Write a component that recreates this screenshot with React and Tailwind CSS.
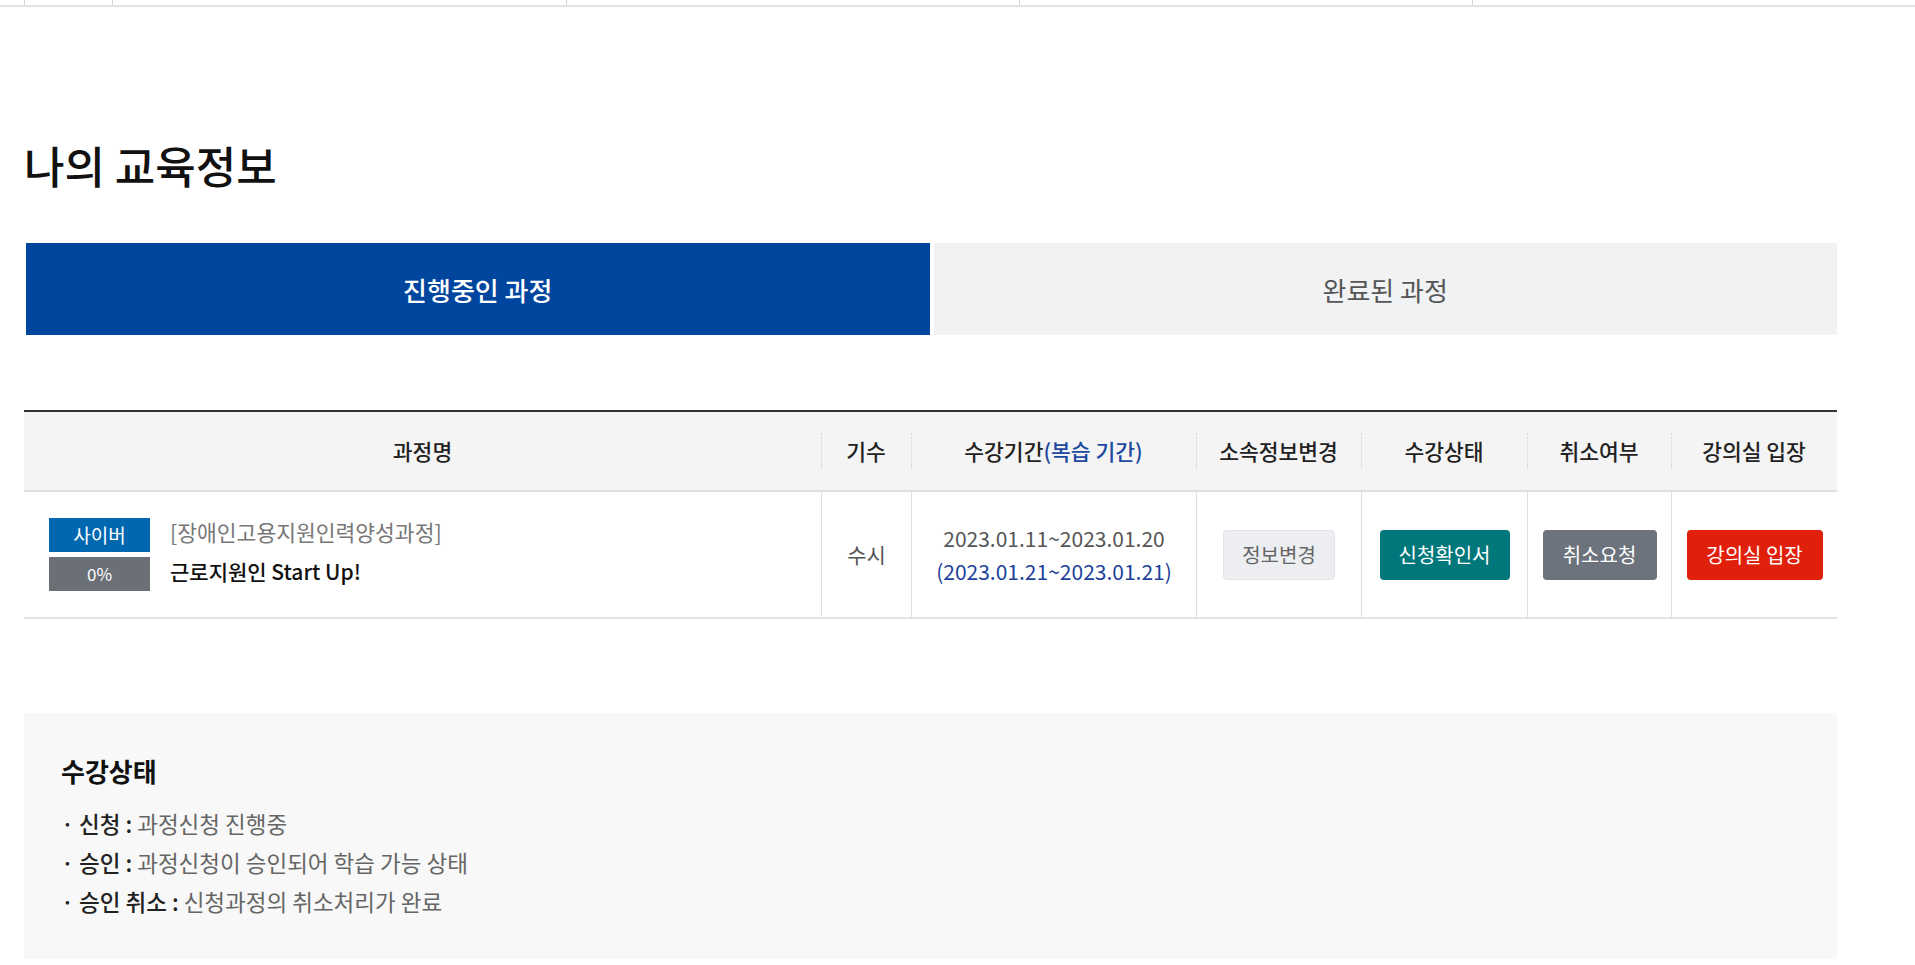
const font = { fontFamily: '"Noto Sans CJK KR", "Noto Sans", sans-serif' };

const headCols = [
  { label: "과정명" },
  { label: "기수" },
  { label: "수강기간", sub: "(복습 기간)" },
  { label: "소속정보변경" },
  { label: "수강상태" },
  { label: "취소여부" },
  { label: "강의실 입장" },
];

const gridCols =
  "grid grid-cols-[797px_90px_285px_165px_166px_144px_166px]";

const App = () => {
  return (
    <div className="min-h-screen bg-white text-[#222]" style={font}>
      {/* 위쪽 표의 끝부분 */}
      <div className="flex h-[7px] border-b-2 border-[#e2e2e2]">
        <div className="w-[24px]" />
        <div className="w-[88px] border-l border-[#d6d6d6]" />
        <div className="w-[454px] border-l border-[#d6d6d6]" />
        <div className="w-[453px] border-l border-[#d6d6d6]" />
        <div className="w-[453px] border-l border-[#d6d6d6]" />
        <div className="flex-1 border-l border-[#d6d6d6]" />
      </div>

      <div className="w-[1813px] ml-[24px]">
        <h2 className="mt-[136px] text-[44px] leading-none font-medium text-[#111]">
          나의 교육정보
        </h2>

        <div className="mt-[56px] grid grid-cols-2 gap-1 pl-[2px]">
          <button className="h-[92px] bg-[#00469e] text-white text-[26px] font-medium">
            진행중인 과정
          </button>
          <button className="h-[92px] bg-[#f1f2f4] text-[#555] text-[26px]">
            완료된 과정
          </button>
        </div>

        <div className="mt-[75px] border-t-2 border-[#333]">
          <div
            className={`${gridCols} h-[80px] bg-[#f4f4f4] border-b-2 border-[#e0e0e0]`}
          >
            {headCols.map((c, i) => (
              <div
                key={c.label}
                className={`relative flex items-center justify-center text-[21.5px] font-medium text-[#222] ${
                  i > 0
                    ? "before:absolute before:left-0 before:top-1/2 before:-translate-y-1/2 before:h-[36px] before:border-l before:border-dotted before:border-[#c9d0da]"
                    : ""
                }`}
              >
                {c.label}
                {c.sub && <span className="text-[#1d4aa0]">{c.sub}</span>}
              </div>
            ))}
          </div>

          <div className={`${gridCols} h-[127px] border-b-2 border-[#e2e2e2]`}>
            <div className="flex items-center gap-[20px] pl-[25px]">
              <div className="flex flex-col gap-[5px]">
                <span className="flex h-[34px] w-[101px] items-center justify-center bg-[#0068b0] text-[19px] text-white">
                  사이버
                </span>
                <span className="flex h-[34px] w-[101px] items-center justify-center bg-[#6b7077] text-[17px] text-white">
                  0%
                </span>
              </div>
              <div className="flex flex-col gap-[9px] pb-[7px]">
                <span className="text-[21.5px] leading-[31px] text-[#777]">
                  [장애인고용지원인력양성과정]
                </span>
                <span className="text-[21px] leading-[31px] font-medium text-[#111]">
                  근로지원인 Start Up!
                </span>
              </div>
            </div>

            <div className="flex items-center justify-center border-l border-[#dedede] text-[21px] text-[#555]">
              수시
            </div>

            <div className="flex flex-col items-center justify-center border-l border-[#dedede] text-[21px] leading-[33px]">
              <span className="text-[#555]">2023.01.11~2023.01.20</span>
              <span className="text-[#1d3f9a]">(2023.01.21~2023.01.21)</span>
            </div>

            <div className="flex items-center justify-center border-l border-[#dedede]">
              <button className="h-[50px] w-[112px] rounded border border-[#e2e4e7] bg-[#eceef1] text-[20px] text-[#666]">
                정보변경
              </button>
            </div>

            <div className="flex items-center justify-center border-l border-[#dedede]">
              <button className="h-[50px] w-[130px] rounded bg-[#00777a] text-[20px] text-white">
                신청확인서
              </button>
            </div>

            <div className="flex items-center justify-center border-l border-[#dedede]">
              <button className="h-[50px] w-[114px] rounded bg-[#6c737c] text-[20px] text-white">
                취소요청
              </button>
            </div>

            <div className="flex items-center justify-center border-l border-[#dedede]">
              <button className="h-[50px] w-[136px] rounded bg-[#e1200b] text-[20px] text-white">
                강의실 입장
              </button>
            </div>
          </div>
        </div>

        <div className="mt-[94px] h-[246px] bg-[#f8f8f8] px-[37px] pt-[45px]">
          <h3 className="text-[26px] leading-none font-semibold text-[#111]">
            수강상태
          </h3>
          <ul className="mt-[20px] flex flex-col text-[22.5px] leading-[39px]">
            <li>
              <span className="font-medium text-[#222]">· 신청 : </span>
              <span className="text-[#666]">과정신청 진행중</span>
            </li>
            <li>
              <span className="font-medium text-[#222]">· 승인 : </span>
              <span className="text-[#666]">과정신청이 승인되어 학습 가능 상태</span>
            </li>
            <li>
              <span className="font-medium text-[#222]">· 승인 취소 : </span>
              <span className="text-[#666]">신청과정의 취소처리가 완료</span>
            </li>
          </ul>
        </div>
      </div>
    </div>
  );
};

export default App;
